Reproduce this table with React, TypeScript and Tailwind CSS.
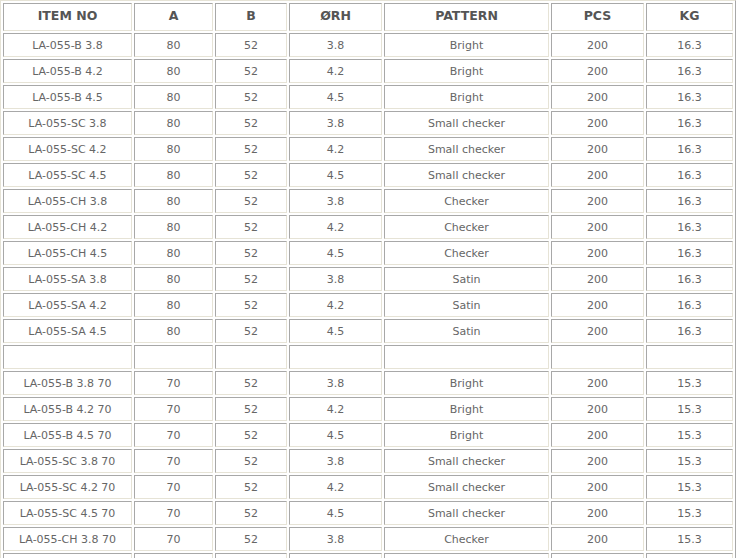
import React from 'react';

type Row = [string, string, string, string, string, string, string] | null;

const head = ['ITEM NO', 'A', 'B', 'ØRH', 'PATTERN', 'PCS', 'KG'];
const widths = ['w-[129px]', 'w-[79px]', 'w-[72px]', 'w-[93px]', 'w-[165px]', 'w-[93px]', 'w-[87px]'];

const patterns: [string, string][] = [
  ['B', 'Bright'],
  ['SC', 'Small checker'],
  ['CH', 'Checker'],
  ['SA', 'Satin'],
];
const sizes = ['3.8', '4.2', '4.5'];

const rows: Row[] = [];
patterns.forEach(([code, name]) =>
  sizes.forEach((s) => rows.push([`LA-055-${code} ${s}`, '80', '52', s, name, '200', '16.3'])),
);
rows.push(null);
// only the part of the second block that fits in the window
patterns.slice(0, 3).forEach(([code, name]) =>
  sizes.forEach((s) => rows.push([`LA-055-${code} ${s} 70`, '70', '52', s, name, '200', '15.3'])),
);
const shown = rows.slice(0, 20);

const cell =
  'border border-t-[#a8a8a8] border-l-[#a8a8a8] border-b-[#e6e3d6] border-r-[#e6e3d6] text-center p-0';

export default function App() {
  return (
    <div className="h-[558px] overflow-hidden bg-white font-['DejaVu_Sans',Verdana,sans-serif]">
      <table className="table-fixed w-[735px] border-separate border-spacing-[2px] border border-t-[#e6e3d6] border-l-[#e6e3d6] border-b-[#a8a8a8] border-r-[#a8a8a8]">
        <thead>
          <tr className="h-[28px]">
            {head.map((h, i) => (
              <th key={h} className={`${cell} ${widths[i]} pb-[1px] text-[12.5px] font-bold text-[#555]`}>
                {h}
              </th>
            ))}
          </tr>
        </thead>
        <tbody>
          {shown.map((r, i) => (
            <tr key={i} className="h-[24px]">
              {r
                ? r.map((v, j) => (
                    <td key={j} className={`${cell} pt-[2px] text-[11px] text-[#666]`}>
                      {v}
                    </td>
                  ))
                : head.map((h) => <td key={h} className={cell}></td>)}
            </tr>
          ))}
          {/* next row, cut off by the window edge */}
          <tr className="h-[24px]">
            {head.map((h) => (
              <td key={h} className={cell}></td>
            ))}
          </tr>
        </tbody>
      </table>
    </div>
  );
}
